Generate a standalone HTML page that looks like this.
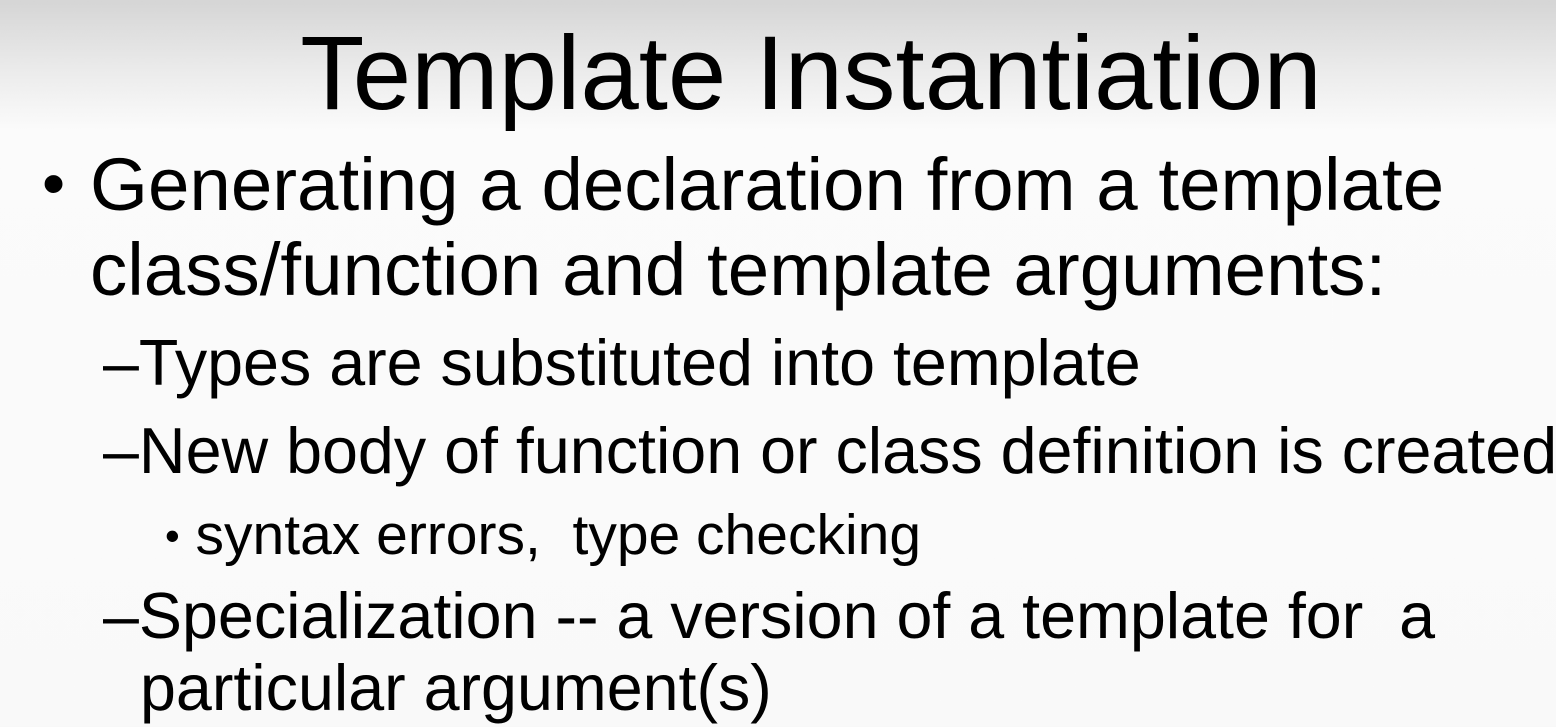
<!DOCTYPE html>
<html><head><meta charset="utf-8"><style>
html,body{margin:0;padding:0}
body{width:1556px;height:727px;overflow:hidden;position:relative;font-family:"Liberation Sans",Arial,sans-serif;color:#000;
background:linear-gradient(to bottom,#d5d5d5 0px,#ebebeb 70px,#fbfbfb 130px,#f9f9f9 727px);}
.t{position:absolute;white-space:nowrap;line-height:1}
</style></head><body>
<div class="t" style="left:0;width:1622px;text-align:center;top:21px;font-size:105px">Template Instantiation</div>
<div class="t" style="left:42px;top:150px;font-size:66px">•</div>
<div class="t" style="left:90px;top:148px;font-size:74.5px">Generating a declaration from a template</div>
<div class="t" style="left:90px;top:233px;font-size:74.5px">class/function and template arguments:</div>
<div class="t" style="left:103px;top:331px;font-size:64.6px">–Types are substituted into template</div>
<div class="t" style="left:103px;top:419px;font-size:64.6px">–New body of function or class definition is created</div>
<div class="t" style="left:165px;top:507px;font-size:57px"><span style="font-size:42px;position:relative;top:-4px">•</span> syntax errors,&nbsp; type checking</div>
<div class="t" style="left:103px;top:584px;font-size:64.6px">–Specialization -- a version of a template for&nbsp; a</div>
<div class="t" style="left:140px;top:656px;font-size:64.6px">particular argument(s)</div>
</body></html>
